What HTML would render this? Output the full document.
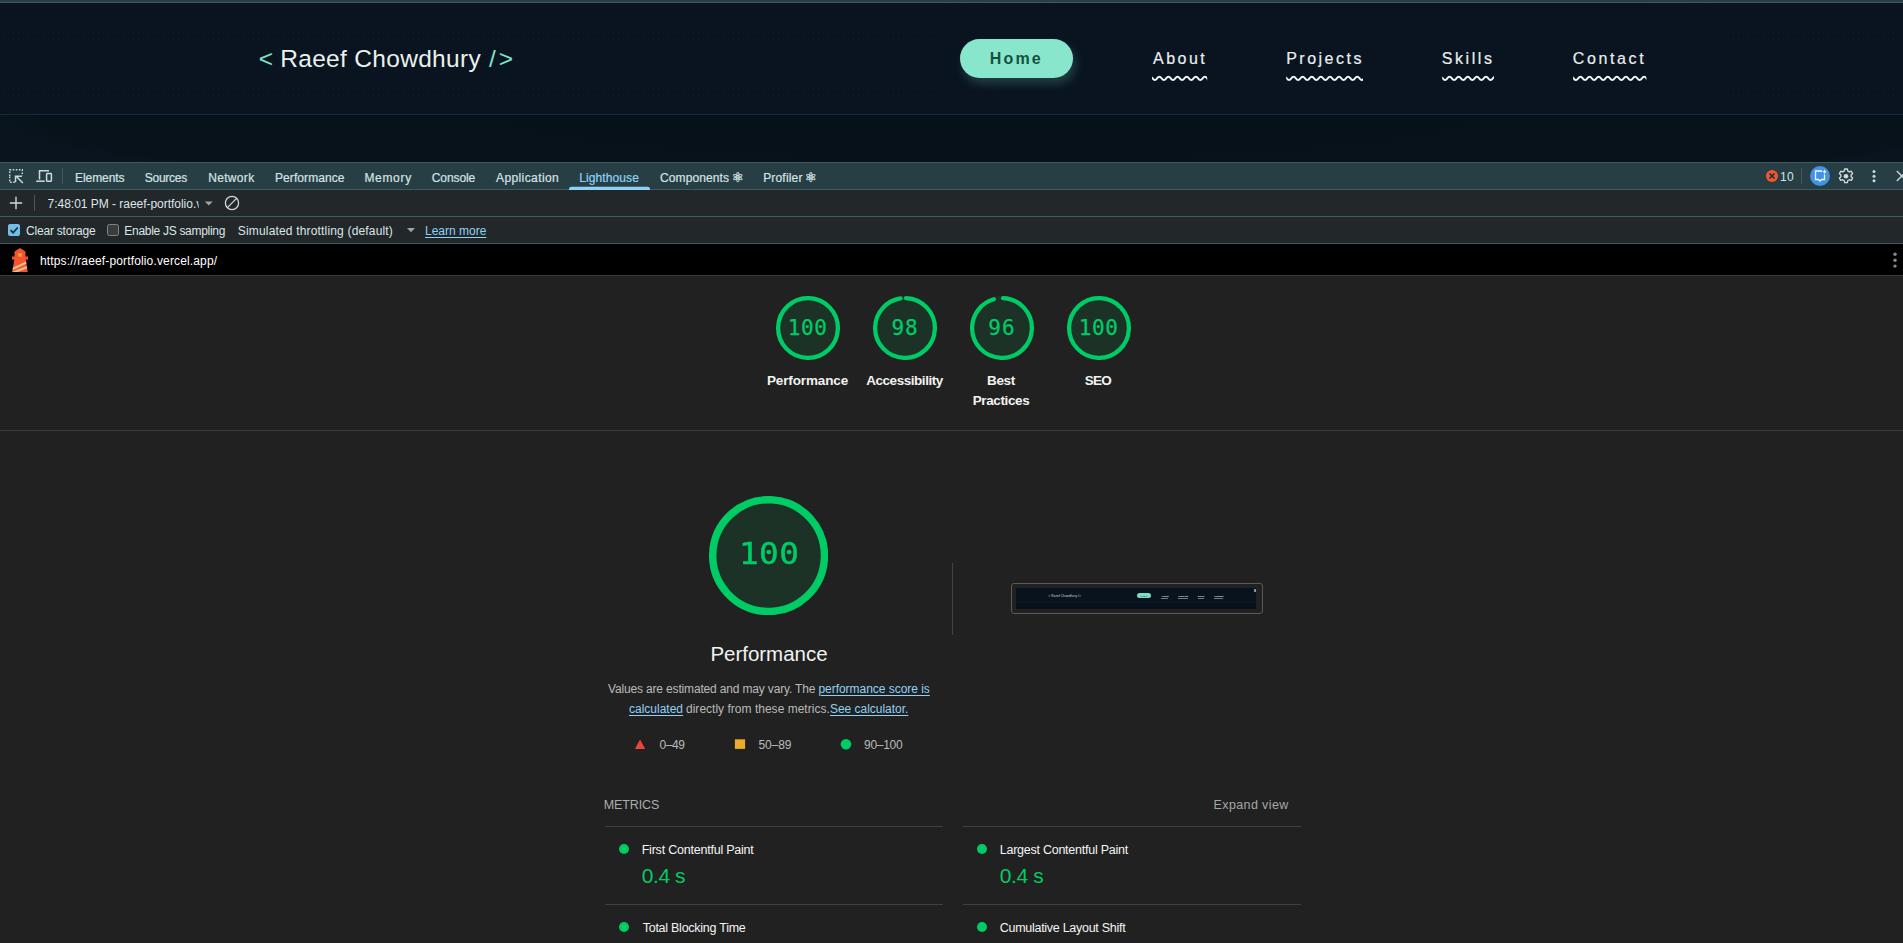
<!DOCTYPE html>
<html lang="en">
<head>
<meta charset="utf-8">
<title>Raeef Chowdhury - Lighthouse</title>
<style>
*{box-sizing:border-box;margin:0;padding:0}
html,body{width:1903px;height:943px;overflow:hidden;background:#212121}
body{position:relative;font-family:"Liberation Sans",sans-serif}
.abs{position:absolute}
.t{position:absolute;white-space:nowrap;line-height:1}
/* site */
#site{position:absolute;left:0;top:0;width:1903px;height:162px;background:#07121a;overflow:hidden}
#site .below{position:absolute;left:0;top:115px;width:1903px;height:47px;background:radial-gradient(ellipse 985px 90px at 52% 0,#07111a 0,#07121a 96%,#09141e 101%)}
#site .topbar{position:absolute;left:0;top:0;width:100%;height:2px;background:#273f44}
#site .topline{position:absolute;left:0;top:2px;width:100%;height:1px;background:#4a5558}
#site header{position:absolute;left:0;top:3px;width:100%;height:112px;background:#091420;border-bottom:1px solid #1a2b38}
#site .dots{position:absolute;left:0;top:3px;width:100%;height:111px;background:radial-gradient(circle at 3.5px 1.5px,#101d27 .55px,rgba(16,29,39,0) .95px) 0 0/5px 7px;-webkit-mask-image:linear-gradient(90deg,#000 0,#000 46%,transparent 56%,transparent 86%,#000 92%);mask-image:linear-gradient(90deg,#000 0,#000 46%,transparent 56%,transparent 86%,#000 92%)}
.pill{position:absolute;left:960px;top:39px;width:113px;height:39px;border-radius:20px;background:#88e6cc;box-shadow:3px 6px 10px rgba(136,230,204,.2)}
/* devtools */
#dt{position:absolute;left:0;top:162px;width:1903px;height:781px;background:#212121}
.hl{position:absolute;left:0;width:1903px;height:1px;background:#3f5b61}
.tabbar{position:absolute;left:0;top:1px;width:1903px;height:26px;background:#273f44}
.tb{position:absolute;left:0;width:1903px;height:26px;background:#22272a}
.urlbar{position:absolute;left:0;top:82px;width:1903px;height:31px;background:#000}
.line{position:absolute;height:1px;background:#404040}
.nv{top:6.6px;font:700 2.3px/1 "Liberation Sans",sans-serif;color:#f2f6f5;letter-spacing:.1px;white-space:nowrap}
.nu{top:10px;height:.6px;background:#6d7a80}
.dot{position:absolute;width:10px;height:10px;border-radius:50%;background:#00cc66}
</style>
</head>
<body>

<!-- ===================== inspected page ===================== -->
<div id="site">
  <header></header>
  <div class="dots"></div>
  <div class="below"></div>
  <div class="topbar"></div><div class="topline"></div>
  <div class="pill"></div>
  <svg class="abs" style="left:0;top:0" width="1903" height="162" viewBox="0 0 1903 162"><defs><clipPath id="wc0"><rect x="1152.0" y="70" width="55.2" height="16"/></clipPath><clipPath id="wc1"><rect x="1286.2" y="70" width="76.8" height="16"/></clipPath><clipPath id="wc2"><rect x="1442.2" y="70" width="51.8" height="16"/></clipPath><clipPath id="wc3"><rect x="1573.1" y="70" width="73.3" height="16"/></clipPath></defs><path clip-path="url(#wc0)" fill="none" stroke="#eff5f2" stroke-width="1.900" d="M1148.00 78.4 q2.275 -3.300 4.55 0 t4.55 0 t4.55 0 t4.55 0 t4.55 0 t4.55 0 t4.55 0 t4.55 0 t4.55 0 t4.55 0 t4.55 0 t4.55 0 t4.55 0 t4.55 0 t4.55 0 t4.55 0"/><path clip-path="url(#wc1)" fill="none" stroke="#eff5f2" stroke-width="1.900" d="M1282.20 78.4 q2.275 -3.300 4.55 0 t4.55 0 t4.55 0 t4.55 0 t4.55 0 t4.55 0 t4.55 0 t4.55 0 t4.55 0 t4.55 0 t4.55 0 t4.55 0 t4.55 0 t4.55 0 t4.55 0 t4.55 0 t4.55 0 t4.55 0 t4.55 0 t4.55 0"/><path clip-path="url(#wc2)" fill="none" stroke="#eff5f2" stroke-width="1.900" d="M1438.20 78.4 q2.275 -3.300 4.55 0 t4.55 0 t4.55 0 t4.55 0 t4.55 0 t4.55 0 t4.55 0 t4.55 0 t4.55 0 t4.55 0 t4.55 0 t4.55 0 t4.55 0 t4.55 0 t4.55 0"/><path clip-path="url(#wc3)" fill="none" stroke="#eff5f2" stroke-width="1.900" d="M1569.10 78.4 q2.275 -3.300 4.55 0 t4.55 0 t4.55 0 t4.55 0 t4.55 0 t4.55 0 t4.55 0 t4.55 0 t4.55 0 t4.55 0 t4.55 0 t4.55 0 t4.55 0 t4.55 0 t4.55 0 t4.55 0 t4.55 0 t4.55 0 t4.55 0 t4.55 0"/></svg>
</div>

<!-- ===================== devtools ===================== -->
<div id="dt">
  <div class="hl" style="top:0"></div>
  <div class="tabbar"></div>
  <div class="hl" style="top:27px"></div>
  <div class="tb" style="top:28px"></div>
  <div class="hl" style="top:54px"></div>
  <div class="tb" style="top:55px"></div>
  <div class="hl" style="top:81px"></div>
  <div class="urlbar"></div>
  <div class="hl" style="top:113px;background:#3a3a3a"></div>
</div>


<!-- ===================== lighthouse report ===================== -->
<div id="lh">
<svg class="abs" style="left:776.0px;top:296.0px" width="64" height="64" viewBox="0 0 120 120"><circle cx="60" cy="60" r="60" fill="#00cc66" opacity=".1"/><circle cx="60" cy="60" r="56" fill="none" stroke="#00cc66" stroke-width="8" stroke-linecap="round" stroke-dasharray="351.86 351.86" transform="rotate(-87.954 60 60)"/></svg>
<svg class="abs" style="left:873.0px;top:296.0px" width="64" height="64" viewBox="0 0 120 120"><circle cx="60" cy="60" r="60" fill="#00cc66" opacity=".1"/><circle cx="60" cy="60" r="56" fill="none" stroke="#00cc66" stroke-width="8" stroke-linecap="round" stroke-dasharray="340.82 351.86" transform="rotate(-87.954 60 60)"/></svg>
<svg class="abs" style="left:970.0px;top:296.0px" width="64" height="64" viewBox="0 0 120 120"><circle cx="60" cy="60" r="60" fill="#00cc66" opacity=".1"/><circle cx="60" cy="60" r="56" fill="none" stroke="#00cc66" stroke-width="8" stroke-linecap="round" stroke-dasharray="333.78 351.86" transform="rotate(-87.954 60 60)"/></svg>
<svg class="abs" style="left:1067.0px;top:296.0px" width="64" height="64" viewBox="0 0 120 120"><circle cx="60" cy="60" r="60" fill="#00cc66" opacity=".1"/><circle cx="60" cy="60" r="56" fill="none" stroke="#00cc66" stroke-width="8" stroke-linecap="round" stroke-dasharray="351.86 351.86" transform="rotate(-87.954 60 60)"/></svg>
<svg class="abs" style="left:709px;top:495.850px" width="119.200" height="119.200" viewBox="0 0 120 120"><circle cx="60" cy="60" r="60" fill="#00cc66" opacity=".1"/><circle cx="60" cy="60" r="56.250" fill="none" stroke="#00cc66" stroke-width="7.500" stroke-linecap="round" stroke-dasharray="351.86 351.86" transform="rotate(-87.954 60 60)"/></svg>
<div class="line" style="left:0;top:430px;width:1903px;background:#3a3a3a"></div>
<div class="line" style="left:952px;top:563px;width:1px;height:72px;background:#424242"></div>
<!-- screenshot thumbnail -->
<div class="abs" style="left:1011px;top:583px;width:252px;height:31px;border:1px solid #5a5a5a;border-radius:3px"></div>
<div class="abs" id="thumb" style="left:1016px;top:588px;width:240px;height:21px;background:#08131d;overflow:hidden">
  <div class="abs" style="left:0;top:14px;width:240px;height:1px;background:#0b1822"></div>
  <div class="abs" style="left:0;top:15px;width:240px;height:6px;background:#06101a"></div>
  <span class="abs" style="left:32.5px;top:6.9px;font:3.2px/1 'Liberation Sans',sans-serif;color:#cfd8d6;white-space:nowrap;letter-spacing:.02px">&lt; Raeef Chowdhury /&gt;</span>
  <div class="abs" style="left:120.7px;top:4.9px;width:14.6px;height:5.6px;border-radius:3px;background:#7fdcc4"></div>
  <span class="abs" style="left:124.5px;top:6.6px;font:700 2.1px/1 'Liberation Sans',sans-serif;color:#1d5347;letter-spacing:.3px">Home</span>
  <span class="abs nv" style="left:145.4px">About</span><span class="abs nv" style="left:162.2px">Projects</span>
  <span class="abs nv" style="left:181.8px">Skills</span><span class="abs nv" style="left:198.3px">Contact</span>
  <i class="abs nu" style="left:145.4px;width:6.8px"></i><i class="abs nu" style="left:162.2px;width:9.6px"></i>
  <i class="abs nu" style="left:181.8px;width:6.5px"></i><i class="abs nu" style="left:198.3px;width:9.2px"></i>
  <div class="abs" style="left:238px;top:1px;width:1.5px;height:3px;background:#8b949a"></div>
</div>
<!-- legend -->
<svg class="abs" style="left:630px;top:736px" width="280" height="16" viewBox="630 736 280 16">
  <path d="M634.9 749.1h10.3l-5.15-9.5z" fill="#f0423c"/>
  <rect x="734.9" y="739.3" width="10.2" height="9.6" fill="#eeaa2c"/>
  <circle cx="846" cy="744.3" r="5.3" fill="#00cc66"/>
</svg>
<!-- metrics -->
<div class="line" style="left:605px;top:826px;width:338px"></div>
<div class="line" style="left:963px;top:826px;width:338px"></div>
<div class="line" style="left:605px;top:904px;width:338px"></div>
<div class="line" style="left:963px;top:904px;width:338px"></div>
<div class="dot" style="left:619px;top:844.2px"></div>
<div class="dot" style="left:977px;top:844.2px"></div>
<div class="dot" style="left:619px;top:922.2px"></div>
<div class="dot" style="left:977px;top:922.2px"></div>
</div>


<!-- devtools icons (coordinates in page space) -->
<svg class="abs" style="left:0;top:162px" width="1903" height="114" viewBox="0 162 1903 114">
  <!-- inspect element -->
  <g stroke="#cfd9db" fill="none" stroke-width="1.4">
    <path d="M9.7 176v-6.3h12.6v6" stroke-dasharray="1.6 1.5"/>
    <path d="M9.7 176.5v5.8h6" stroke-dasharray="1.6 1.5"/>
    <path d="M22.900 183l-7-7M15.500 182.300v-6.100h6.400" stroke-width="1.500"/>
  </g>
  <!-- device toolbar -->
  <g stroke="#cfd9db" fill="none" stroke-width="1.5">
    <path d="M39.5 179.5v-8.7h9.5"/>
    <path d="M36.2 181.2h8.6"/>
    <rect x="46.6" y="173.6" width="4.8" height="7.6" rx=".6"/>
  </g>
  <rect x="62" y="168" width="1" height="16" fill="#42595e"/>
  <!-- lighthouse tab underline -->
  <path d="M569 190v-.800a2.500 2.500 0 0 1 2.500-2.500h76a2.500 2.500 0 0 1 2.500 2.500v.800z" fill="#8fd1f6"/>
  <!-- error count -->
  <circle cx="1772" cy="176" r="6" fill="#f0562f"/>
  <path d="M1769.500 173.500l5 5m0-5l-5 5" stroke="#1f3036" stroke-width="1.700"/>
  <rect x="1801" y="168" width="1" height="16" fill="#42595e"/>
  <!-- AI assistance -->
  <circle cx="1820" cy="176" r="10" fill="#4193e4"/>
  <path d="M1822 171h-6.500v8.500h3l1.500 1.600 1.500-1.600h3v-5" fill="none" stroke="#f4f8fb" stroke-width="1.300"/>
  <path d="M1824.500 169.300l.700 1.800 1.800.700-1.800.700-.700 1.800-.700-1.800-1.800-.700 1.800-.700z" fill="#f4f8fb"/>
  <!-- settings gear -->
  <g transform="translate(1846 176.200)">
    <path fill="none" stroke="#cfd9db" stroke-width="1.350" stroke-linejoin="round" d="M-1.300 -7.200h2.600l.500 2a5.500 5.500 0 0 1 1.500.870l2-.600 1.300 2.250-1.500 1.400a5.500 5.500 0 0 1 0 1.750l1.500 1.400-1.300 2.250-2-.600a5.500 5.500 0 0 1-1.500.870l-.500 2h-2.600l-.500-2a5.500 5.500 0 0 1-1.500-.870l-2 .600-1.300-2.250 1.500-1.400a5.500 5.500 0 0 1 0-1.750l-1.500-1.400 1.300-2.250 2 .600a5.500 5.500 0 0 1 1.500-.870z"/>
    <circle r="2.300" fill="#cfd9db"/>
  </g>
  <!-- kebab -->
  <g fill="#cfd9db"><circle cx="1874" cy="171.600" r="1.500"/><circle cx="1874" cy="176.200" r="1.500"/><circle cx="1874" cy="180.800" r="1.500"/></g>
  <!-- close -->
  <path d="M1896.800 171l10 10m0-10l-10 10" stroke="#cfd9db" stroke-width="1.400"/>

  <!-- toolbar 2 -->
  <path d="M9.800 203h12.400M16 196.800v12.400" stroke="#cfd9db" stroke-width="1.400"/>
  <rect x="34" y="195" width="1" height="16" fill="#42595e"/>
  <path d="M204.800 201.400h8l-4 4.200z" fill="#9ba69f"/>
  <circle cx="232" cy="203" r="6.600" fill="none" stroke="#cfd9db" stroke-width="1.300"/>
  <path d="M227.400 207.600l9.200-9.200" stroke="#cfd9db" stroke-width="1.300"/>

  <!-- toolbar 3 -->
  <rect x="8" y="224" width="12" height="12" rx="2" fill="#6fbfe8"/>
  <path d="M10.600 230.200l2.500 2.500 4.600-5.200" fill="none" stroke="#1d2a30" stroke-width="1.700"/>
  <rect x="107.500" y="224.500" width="11" height="11" rx="2" fill="#3a3d3e" stroke="#7f8784" stroke-width="1"/>
  <path d="M407 228h8l-4 4.200z" fill="#9ba69f"/>

  <!-- url bar: lighthouse logo -->
  <g transform="translate(4 244) scale(1.3333)">
    <path d="M12 3l4.125 2.625v3.750H18v2.250h-1.688l1.500 9.375H6.188l1.500-9.375H6v-2.250h1.875V5.648z" fill="#f4532f"/>
    <clipPath id="twr"><path d="M7.690 11.625h8.620l1.500 9.375H6.188z"/></clipPath>
    <g clip-path="url(#twr)" stroke="#e2bb8a" stroke-width="1.700"><path d="M6 18.900L18 13.300"/><path d="M5 22.200L19 16.600"/></g>
    <rect x="10.600" y="6.900" width="2.800" height="2.600" fill="#eaa52b"/>
  </g>
  <g fill="#7f8b8d"><circle cx="1895" cy="254.300" r="1.700"/><circle cx="1895" cy="260.200" r="1.700"/><circle cx="1895" cy="266.100" r="1.700"/></g>
</svg>

<span class="t" style='left:258.70px;top:46.80px;font:400 24.5px/1 "Liberation Sans", sans-serif;color:#7fe3c9;letter-spacing:0.000px;'>&lt;</span>
<span class="t" style='left:280.20px;top:46.80px;font:400 24.5px/1 "Liberation Sans", sans-serif;color:#e9f1ec;letter-spacing:0.314px;'>Raeef Chowdhury</span>
<span class="t" style='left:489.10px;top:46.80px;font:400 24.5px/1 "Liberation Sans", sans-serif;color:#7fe3c9;letter-spacing:2.800px;'>/&gt;</span>
<span class="t" style='left:989.70px;top:50.80px;font:700 16px/1 "Liberation Sans", sans-serif;color:#17513e;letter-spacing:2.200px;'>Home</span>
<span class="t" style='left:1153.00px;top:51.00px;font:400 16px/1 "Liberation Sans", sans-serif;color:#e8efee;letter-spacing:2.500px;-webkit-text-stroke:.2px #e8efee;'>About</span>
<span class="t" style='left:1286.20px;top:51.00px;font:400 16px/1 "Liberation Sans", sans-serif;color:#e8efee;letter-spacing:2.486px;-webkit-text-stroke:.2px #e8efee;'>Projects</span>
<span class="t" style='left:1441.80px;top:51.00px;font:400 16px/1 "Liberation Sans", sans-serif;color:#e8efee;letter-spacing:2.560px;-webkit-text-stroke:.2px #e8efee;'>Skills</span>
<span class="t" style='left:1572.70px;top:51.00px;font:400 16px/1 "Liberation Sans", sans-serif;color:#e8efee;letter-spacing:2.633px;-webkit-text-stroke:.2px #e8efee;'>Contact</span>
<span class="t" style='left:75.00px;top:172.00px;font:400 12px/1 "Liberation Sans", sans-serif;color:#d6e2e4;letter-spacing:-0.057px;-webkit-text-stroke:.2px #d6e2e4;'>Elements</span>
<span class="t" style='left:144.70px;top:172.00px;font:400 12px/1 "Liberation Sans", sans-serif;color:#d6e2e4;letter-spacing:-0.233px;-webkit-text-stroke:.2px #d6e2e4;'>Sources</span>
<span class="t" style='left:208.20px;top:172.00px;font:400 12px/1 "Liberation Sans", sans-serif;color:#d6e2e4;letter-spacing:0.333px;-webkit-text-stroke:.2px #d6e2e4;'>Network</span>
<span class="t" style='left:275.00px;top:172.00px;font:400 12px/1 "Liberation Sans", sans-serif;color:#d6e2e4;letter-spacing:0.080px;-webkit-text-stroke:.2px #d6e2e4;'>Performance</span>
<span class="t" style='left:364.40px;top:172.00px;font:400 12px/1 "Liberation Sans", sans-serif;color:#d6e2e4;letter-spacing:0.680px;-webkit-text-stroke:.2px #d6e2e4;'>Memory</span>
<span class="t" style='left:431.80px;top:172.00px;font:400 12px/1 "Liberation Sans", sans-serif;color:#d6e2e4;letter-spacing:-0.100px;-webkit-text-stroke:.2px #d6e2e4;'>Console</span>
<span class="t" style='left:496.00px;top:172.00px;font:400 12px/1 "Liberation Sans", sans-serif;color:#d6e2e4;letter-spacing:0.400px;-webkit-text-stroke:.2px #d6e2e4;'>Application</span>
<span class="t" style='left:579.20px;top:172.00px;font:400 12px/1 "Liberation Sans", sans-serif;color:#8fd1f6;letter-spacing:0.111px;-webkit-text-stroke:.2px #8fd1f6;'>Lighthouse</span>
<span class="t" style='left:660.00px;top:172.00px;font:400 12px/1 "Liberation Sans", sans-serif;color:#d6e2e4;letter-spacing:0.111px;-webkit-text-stroke:.2px #d6e2e4;'>Components</span>
<span class="t" style='left:763.20px;top:172.00px;font:400 12px/1 "Liberation Sans", sans-serif;color:#d6e2e4;letter-spacing:0.171px;-webkit-text-stroke:.2px #d6e2e4;'>Profiler</span>
<span class="t" style='left:731.75px;top:170.50px;font:400 13.5px/1 "DejaVu Sans", sans-serif;color:#c3d5d7;letter-spacing:0.000px;-webkit-text-stroke:.5px #c3d5d7;'>&#9883;</span>
<span class="t" style='left:804.80px;top:170.50px;font:400 13.5px/1 "DejaVu Sans", sans-serif;color:#c3d5d7;letter-spacing:0.000px;-webkit-text-stroke:.5px #c3d5d7;'>&#9883;</span>
<span class="t" style='left:1780.00px;top:171.00px;font:400 12px/1 "Liberation Sans", sans-serif;color:#d6e2e4;letter-spacing:0.400px;'>10</span>
<span class="t" style='left:47.60px;top:198.00px;font:400 12px/1 "Liberation Sans", sans-serif;color:#dde5e7;letter-spacing:-0.028px;clip-path:inset(0 3.4px 0 0);'>7:48:01 PM - raeef-portfolio.v</span>
<span class="t" style='left:26.00px;top:225.00px;font:400 12px/1 "Liberation Sans", sans-serif;color:#dde5e7;letter-spacing:-0.200px;'>Clear storage</span>
<span class="t" style='left:124.30px;top:225.00px;font:400 12px/1 "Liberation Sans", sans-serif;color:#dde5e7;letter-spacing:-0.294px;'>Enable JS sampling</span>
<span class="t" style='left:237.80px;top:225.00px;font:400 12px/1 "Liberation Sans", sans-serif;color:#dde5e7;letter-spacing:0.172px;'>Simulated throttling (default)</span>
<span class="t" style='left:425.00px;top:225.00px;font:400 12px/1 "Liberation Sans", sans-serif;color:#8fd1f6;letter-spacing:0.000px;text-decoration:underline;text-underline-offset:1.5px;'>Learn more</span>
<span class="t" style='left:40.00px;top:254.60px;font:400 12px/1 "Liberation Sans", sans-serif;color:#ffffff;letter-spacing:0.147px;'>https://raeef-portfolio.vercel.app/</span>
<span class="t" style='left:787.70px;top:318.20px;font:400 21px/1 "DejaVu Sans Mono", "Liberation Mono", monospace;color:#00cc66;letter-spacing:0.700px;-webkit-text-stroke:.25px #00cc66;'>100</span>
<span class="t" style='left:891.50px;top:318.20px;font:400 21px/1 "DejaVu Sans Mono", "Liberation Mono", monospace;color:#00cc66;letter-spacing:0.800px;-webkit-text-stroke:.25px #00cc66;'>98</span>
<span class="t" style='left:988.30px;top:318.20px;font:400 21px/1 "DejaVu Sans Mono", "Liberation Mono", monospace;color:#00cc66;letter-spacing:1.000px;-webkit-text-stroke:.25px #00cc66;'>96</span>
<span class="t" style='left:1078.70px;top:318.20px;font:400 21px/1 "DejaVu Sans Mono", "Liberation Mono", monospace;color:#00cc66;letter-spacing:0.700px;-webkit-text-stroke:.25px #00cc66;'>100</span>
<span class="t" style='left:766.90px;top:373.50px;font:700 13.5px/1 "Liberation Sans", sans-serif;color:#f1f3f2;letter-spacing:-0.120px;'>Performance</span>
<span class="t" style='left:866.20px;top:373.50px;font:700 13.5px/1 "Liberation Sans", sans-serif;color:#f1f3f2;letter-spacing:-0.450px;'>Accessibility</span>
<span class="t" style='left:987.00px;top:373.50px;font:700 13.5px/1 "Liberation Sans", sans-serif;color:#f1f3f2;letter-spacing:-0.333px;'>Best</span>
<span class="t" style='left:972.70px;top:393.50px;font:700 13.5px/1 "Liberation Sans", sans-serif;color:#f1f3f2;letter-spacing:-0.375px;'>Practices</span>
<span class="t" style='left:1084.80px;top:373.50px;font:700 13.5px/1 "Liberation Sans", sans-serif;color:#f1f3f2;letter-spacing:-0.800px;'>SEO</span>
<span class="t" style='left:738.50px;top:538.90px;font:400 30px/1 "DejaVu Sans Mono", "Liberation Mono", monospace;color:#00cc66;letter-spacing:0.400px;transform:scaleX(1.09);transform-origin:0 0;-webkit-text-stroke:.5px #00cc66;'>100</span>
<span class="t" style='left:710.40px;top:643.50px;font:400 20.5px/1 "Liberation Sans", sans-serif;color:#f0f4f1;letter-spacing:-0.020px;'>Performance</span>
<span class="t" style='left:608.00px;top:682.90px;font:400 12px/1 "Liberation Sans", sans-serif;color:#b7bbba;letter-spacing:-0.162px;'>Values are estimated and may vary. The</span>
<span class="t" style='left:818.40px;top:682.90px;font:400 12px/1 "Liberation Sans", sans-serif;color:#8fd1f6;letter-spacing:-0.032px;text-decoration:underline;text-underline-offset:1.5px;'>performance score is</span>
<span class="t" style='left:629.00px;top:702.90px;font:400 12px/1 "Liberation Sans", sans-serif;color:#8fd1f6;letter-spacing:0.000px;text-decoration:underline;text-underline-offset:1.5px;'>calculated</span>
<span class="t" style='left:686.00px;top:702.90px;font:400 12px/1 "Liberation Sans", sans-serif;color:#b7bbba;letter-spacing:0.015px;'>directly from these metrics.</span>
<span class="t" style='left:830.00px;top:702.90px;font:400 12px/1 "Liberation Sans", sans-serif;color:#8fd1f6;letter-spacing:-0.029px;text-decoration:underline;text-underline-offset:1.5px;'>See calculator.</span>
<span class="t" style='left:659.50px;top:738.80px;font:400 12px/1 "Liberation Sans", sans-serif;color:#b7bbba;letter-spacing:-0.400px;'>0&ndash;49</span>
<span class="t" style='left:758.50px;top:738.80px;font:400 12px/1 "Liberation Sans", sans-serif;color:#b7bbba;letter-spacing:-0.100px;'>50&ndash;89</span>
<span class="t" style='left:864.00px;top:738.80px;font:400 12px/1 "Liberation Sans", sans-serif;color:#b7bbba;letter-spacing:-0.280px;'>90&ndash;100</span>
<span class="t" style='left:603.80px;top:798.90px;font:400 12.5px/1 "Liberation Sans", sans-serif;color:#a9aeac;letter-spacing:-0.133px;'>METRICS</span>
<span class="t" style='left:1213.60px;top:798.90px;font:400 12.5px/1 "Liberation Sans", sans-serif;color:#a3a8a6;letter-spacing:0.380px;'>Expand view</span>
<span class="t" style='left:641.70px;top:843.90px;font:400 12.5px/1 "Liberation Sans", sans-serif;color:#f4f5f5;letter-spacing:-0.219px;'>First Contentful Paint</span>
<span class="t" style='left:999.80px;top:843.90px;font:400 12.5px/1 "Liberation Sans", sans-serif;color:#f4f5f5;letter-spacing:-0.252px;'>Largest Contentful Paint</span>
<span class="t" style='left:641.70px;top:865.30px;font:400 21px/1 "Liberation Sans", sans-serif;color:#00cc66;letter-spacing:-0.400px;'>0.4 s</span>
<span class="t" style='left:999.80px;top:865.30px;font:400 21px/1 "Liberation Sans", sans-serif;color:#00cc66;letter-spacing:-0.400px;'>0.4 s</span>
<span class="t" style='left:642.70px;top:921.90px;font:400 12.5px/1 "Liberation Sans", sans-serif;color:#f4f5f5;letter-spacing:-0.256px;'>Total Blocking Time</span>
<span class="t" style='left:999.80px;top:921.90px;font:400 12.5px/1 "Liberation Sans", sans-serif;color:#f4f5f5;letter-spacing:-0.282px;'>Cumulative Layout Shift</span>
</body>
</html>
